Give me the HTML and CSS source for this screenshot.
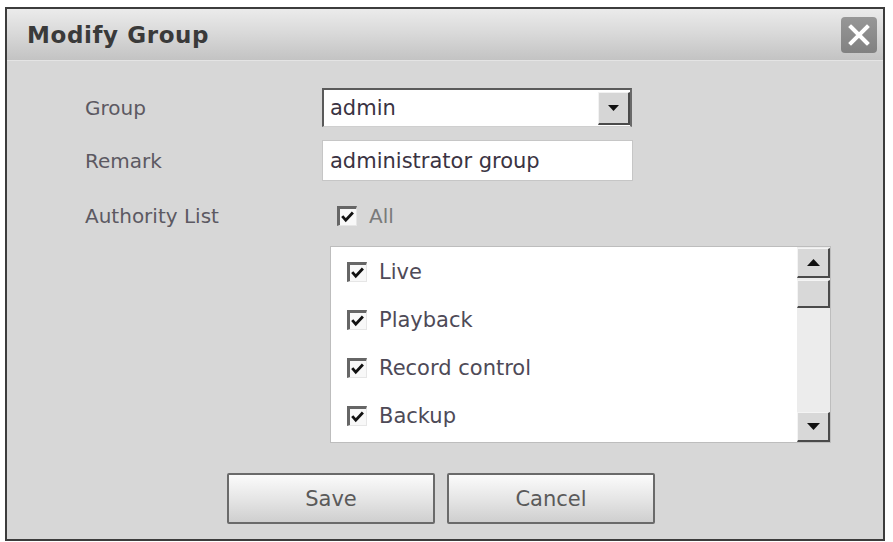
FILE: index.html
```html
<!DOCTYPE html>
<html lang="en">
<head>
<meta charset="utf-8">
<title>Modify Group</title>
<link rel="stylesheet" href="styles.css">
</head>
<body>
<div class="dialog">
  <div class="header">
    <span class="title">Modify Group</span>
    <button class="close" aria-label="Close">
      <svg width="36" height="36" viewBox="0 0 36 36"><path d="M10 10 L26 26 M26 10 L10 26" stroke="#fff" stroke-width="4" stroke-linecap="square" fill="none"/></svg>
    </button>
  </div>
  <div class="content">
    <div class="row row-group">
      <span class="label">Group</span>
      <div class="select">
        <span class="select-value">admin</span>
        <span class="select-btn"><svg width="11" height="6" viewBox="0 0 11 6"><path d="M0 0 H11 L5.5 6 Z" fill="#111"/></svg></span>
      </div>
    </div>
    <div class="row row-remark">
      <span class="label">Remark</span>
      <div class="input">administrator group</div>
    </div>
    <div class="row row-auth">
      <span class="label">Authority List</span>
      <div class="check check-all">
        <span class="box"><svg width="18" height="18" viewBox="0 0 18 18"><path d="M2.5 8 L6.5 12.5 L14.5 4" stroke="#111" stroke-width="3.2" fill="none"/></svg></span>
        <span class="check-text">All</span>
      </div>
    </div>
    <div class="list">
      <div class="list-items">
        <div class="check item">
          <span class="box"><svg width="18" height="18" viewBox="0 0 18 18"><path d="M2.5 8 L6.5 12.5 L14.5 4" stroke="#111" stroke-width="3.2" fill="none"/></svg></span>
          <span class="check-text">Live</span>
        </div>
        <div class="check item">
          <span class="box"><svg width="18" height="18" viewBox="0 0 18 18"><path d="M2.5 8 L6.5 12.5 L14.5 4" stroke="#111" stroke-width="3.2" fill="none"/></svg></span>
          <span class="check-text">Playback</span>
        </div>
        <div class="check item">
          <span class="box"><svg width="18" height="18" viewBox="0 0 18 18"><path d="M2.5 8 L6.5 12.5 L14.5 4" stroke="#111" stroke-width="3.2" fill="none"/></svg></span>
          <span class="check-text">Record control</span>
        </div>
        <div class="check item">
          <span class="box"><svg width="18" height="18" viewBox="0 0 18 18"><path d="M2.5 8 L6.5 12.5 L14.5 4" stroke="#111" stroke-width="3.2" fill="none"/></svg></span>
          <span class="check-text">Backup</span>
        </div>
      </div>
      <div class="scrollbar">
        <span class="sb-btn"><svg width="13" height="7" viewBox="0 0 13 7"><path d="M0 7 H13 L6.5 0 Z" fill="#111"/></svg></span>
        <span class="sb-thumb"></span>
        <span class="sb-track"></span>
        <span class="sb-btn"><svg width="13" height="7" viewBox="0 0 13 7"><path d="M0 0 H13 L6.5 7 Z" fill="#111"/></svg></span>
      </div>
    </div>
  </div>
  <div class="actions">
    <button class="btn">Save</button>
    <button class="btn">Cancel</button>
  </div>
</div>
</body>
</html>
```
FILE: styles.css
```css
* {
  box-sizing: border-box;
}

html, body {
  margin: 0;
  padding: 0;
  background: #ffffff;
}

body {
  font-family: "DejaVu Sans", "Liberation Sans", Arial, sans-serif;
}

.dialog {
  margin: 7px 0 0 5px;
  width: 880px;
  height: 534px;
  border: 2px solid #3c3c3c;
  background: #d7d7d7;
  display: flex;
  flex-direction: column;
}

.header {
  height: 52px;
  flex: none;
  display: flex;
  align-items: center;
  justify-content: space-between;
  padding: 0 6px 0 20px;
  background: linear-gradient(#ebebeb, #dadada 45%, #c3c3c3);
  border-bottom: 1px solid #e4e4e4;
}

.title {
  font-weight: bold;
  font-size: 23px;
  letter-spacing: 0.6px;
  color: #3a3a3a;
}

.close {
  width: 36px;
  height: 36px;
  padding: 0;
  border: none;
  border-radius: 4px;
  background: linear-gradient(#979797, #818181);
  display: flex;
  align-items: center;
  justify-content: center;
}

.close svg {
  display: block;
}

.content {
  padding: 27px 0 0 78px;
}

.row {
  display: flex;
  align-items: center;
}

.label {
  width: 237px;
  flex: none;
  font-size: 20px;
  color: #5c5962;
}

.row-group {
  height: 39px;
}

.row-remark {
  margin-top: 13px;
  height: 41px;
}

.row-auth {
  margin-top: 19px;
  height: 32px;
}

.select {
  width: 310px;
  height: 39px;
  background: #ffffff;
  border-style: solid;
  border-width: 2px 2px 1px 2px;
  border-color: #5a5a5a #6a6a6a #cfcfcf #5a5a5a;
  display: flex;
  align-items: center;
  justify-content: space-between;
  padding: 2px 0 2px 6px;
}

.select-value,
.input {
  font-size: 21px;
  color: #3a3342;
}

.select-btn {
  width: 32px;
  height: 33px;
  background: #d6d6d6;
  border-top: 1px solid #f2f2f2;
  border-left: 1px solid #f2f2f2;
  border-right: 2px solid #4a4a4a;
  border-bottom: 2px solid #4a4a4a;
  display: flex;
  align-items: center;
  justify-content: center;
}

.input {
  width: 311px;
  height: 41px;
  background: #ffffff;
  border: 1px solid #c6c6c6;
  display: flex;
  align-items: center;
  padding-left: 7px;
}

.check {
  display: flex;
  align-items: center;
}

.box {
  width: 20px;
  height: 20px;
  flex: none;
  background: #f8f8f8;
  border-style: solid;
  border-width: 3px 1px 1px 3px;
  border-color: #666666 #e6e6e6 #e6e6e6 #666666;
  display: flex;
  align-items: center;
  justify-content: center;
  margin-right: 12px;
}

.check-all {
  margin-left: 15px;
}

.check-all .check-text {
  font-size: 20px;
  color: #7a7a7a;
}

.list {
  margin: 14px 0 0 245px;
  width: 501px;
  height: 197px;
  background: #ffffff;
  border: 1px solid #bdbdbd;
  display: flex;
}

.list-items {
  flex: 1;
  padding: 1px 0 0 16px;
}

.item {
  height: 48px;
}

.item .check-text {
  font-size: 21px;
  color: #4e4a57;
}

.scrollbar {
  width: 33px;
  flex: none;
  display: flex;
  flex-direction: column;
  background: #ececec;
  padding-top: 1px;
}

.sb-btn,
.sb-thumb {
  height: 30px;
  flex: none;
  background: #d8d8d8;
  border-top: 1px solid #f4f4f4;
  border-left: 1px solid #f4f4f4;
  border-right: 2px solid #4a4a4a;
  border-bottom: 2px solid #4a4a4a;
  display: flex;
  align-items: center;
  justify-content: center;
}

.sb-thumb {
  height: 28px;
  margin-top: 2px;
}

.sb-track {
  flex: 1;
}

.actions {
  margin-top: 30px;
  padding-left: 220px;
  display: flex;
  gap: 12px;
}

.btn {
  width: 208px;
  height: 51px;
  border: 2px solid #6a6a6a;
  border-radius: 2px;
  background: linear-gradient(#fbfbfb, #e6e6e6 50%, #cfcfcf);
  font-family: "DejaVu Sans", "Liberation Sans", Arial, sans-serif;
  font-size: 21px;
  color: #5a5a5a;
  padding: 0;
}
```
